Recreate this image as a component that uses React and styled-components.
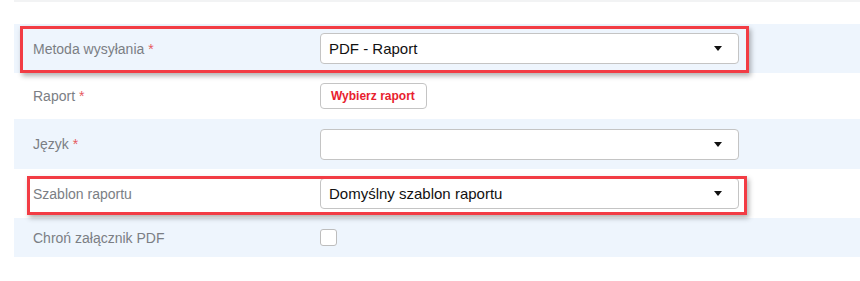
import React from "react";
import styled, { createGlobalStyle } from "styled-components";

const GlobalStyle = createGlobalStyle`
  body {
    margin: 0;
    background: #ffffff;
    font-family: "Liberation Sans", Arial, sans-serif;
  }
`;

const rows = [
  { label: "Metoda wysyłania", required: true, type: "select", value: "PDF - Raport", height: 49 },
  { label: "Raport", required: true, type: "button", value: "Wybierz raport", height: 46 },
  { label: "Język", required: true, type: "select", value: "", height: 50 },
  { label: "Szablon raportu", required: false, type: "select", value: "Domyślny szablon raportu", height: 49 },
  { label: "Chroń załącznik PDF", required: false, type: "checkbox", height: 39 },
];

function App() {
  return (
    <Page>
      <GlobalStyle />
      <TopRule />
      <Form>
        {rows.map((row, index) => (
          <Row key={index} $striped={index % 2 === 0} $height={row.height}>
            <Label>
              {row.label}
              {row.required && <Required> *</Required>}
            </Label>
            <Control>
              {row.type === "select" && (
                <Select>
                  <span>{row.value}</span>
                  <Caret />
                </Select>
              )}
              {row.type === "button" && <PickButton>{row.value}</PickButton>}
              {row.type === "checkbox" && <Checkbox />}
            </Control>
          </Row>
        ))}
      </Form>
      <Highlight $left={20} $top={26} $width={729} $height={47} />
      <Highlight $left={27} $top={176} $width={720} $height={39} />
    </Page>
  );
}

const Page = styled.div`
  position: relative;
  width: 860px;
  height: 281px;
  padding-left: 14px;
  box-sizing: border-box;
`;

const TopRule = styled.div`
  height: 2px;
  background-color: #f2f3f4;
`;

const Form = styled.div`
  margin-top: 22px;
  display: flex;
  flex-direction: column;
`;

const Row = styled.div`
  display: flex;
  align-items: center;
  height: ${(props) => props.$height}px;
  padding-left: 19px;
  background-color: ${(props) => (props.$striped ? "#eef5fd" : "#ffffff")};
`;

const Label = styled.div`
  width: 287px;
  font-size: 14px;
  color: #7b7e84;
`;

const Required = styled.span`
  color: #e65a5f;
`;

const Control = styled.div`
  display: flex;
  align-items: center;
`;

const Select = styled.div`
  display: flex;
  align-items: center;
  justify-content: space-between;
  box-sizing: border-box;
  width: 419px;
  height: 31px;
  padding: 0 16px 0 8px;
  border: 1px solid #c4c4c4;
  border-radius: 4px;
  background-color: #ffffff;
  font-size: 15px;
  color: #111111;
`;

const Caret = styled.span`
  width: 0;
  height: 0;
  border-left: 4px solid transparent;
  border-right: 4px solid transparent;
  border-top: 5px solid #111111;
`;

const PickButton = styled.button`
  box-sizing: border-box;
  height: 26px;
  padding: 0 11px 0 10px;
  border: 1px solid #c4c4c4;
  border-radius: 4px;
  background-color: #ffffff;
  font-family: "Liberation Sans", Arial, sans-serif;
  font-size: 12px;
  font-weight: bold;
  color: #e8212e;
`;

const Checkbox = styled.span`
  box-sizing: border-box;
  width: 17px;
  height: 17px;
  border: 1px solid #bdbdbd;
  border-radius: 3px;
  background-color: #ffffff;
`;

const Highlight = styled.div`
  position: absolute;
  left: ${(props) => props.$left}px;
  top: ${(props) => props.$top}px;
  width: ${(props) => props.$width}px;
  height: ${(props) => props.$height}px;
  box-sizing: border-box;
  border: 3px solid #f23c44;
  box-shadow: 2px 3px 5px rgba(0, 0, 0, 0.3);
  pointer-events: none;
`;

export default App;
